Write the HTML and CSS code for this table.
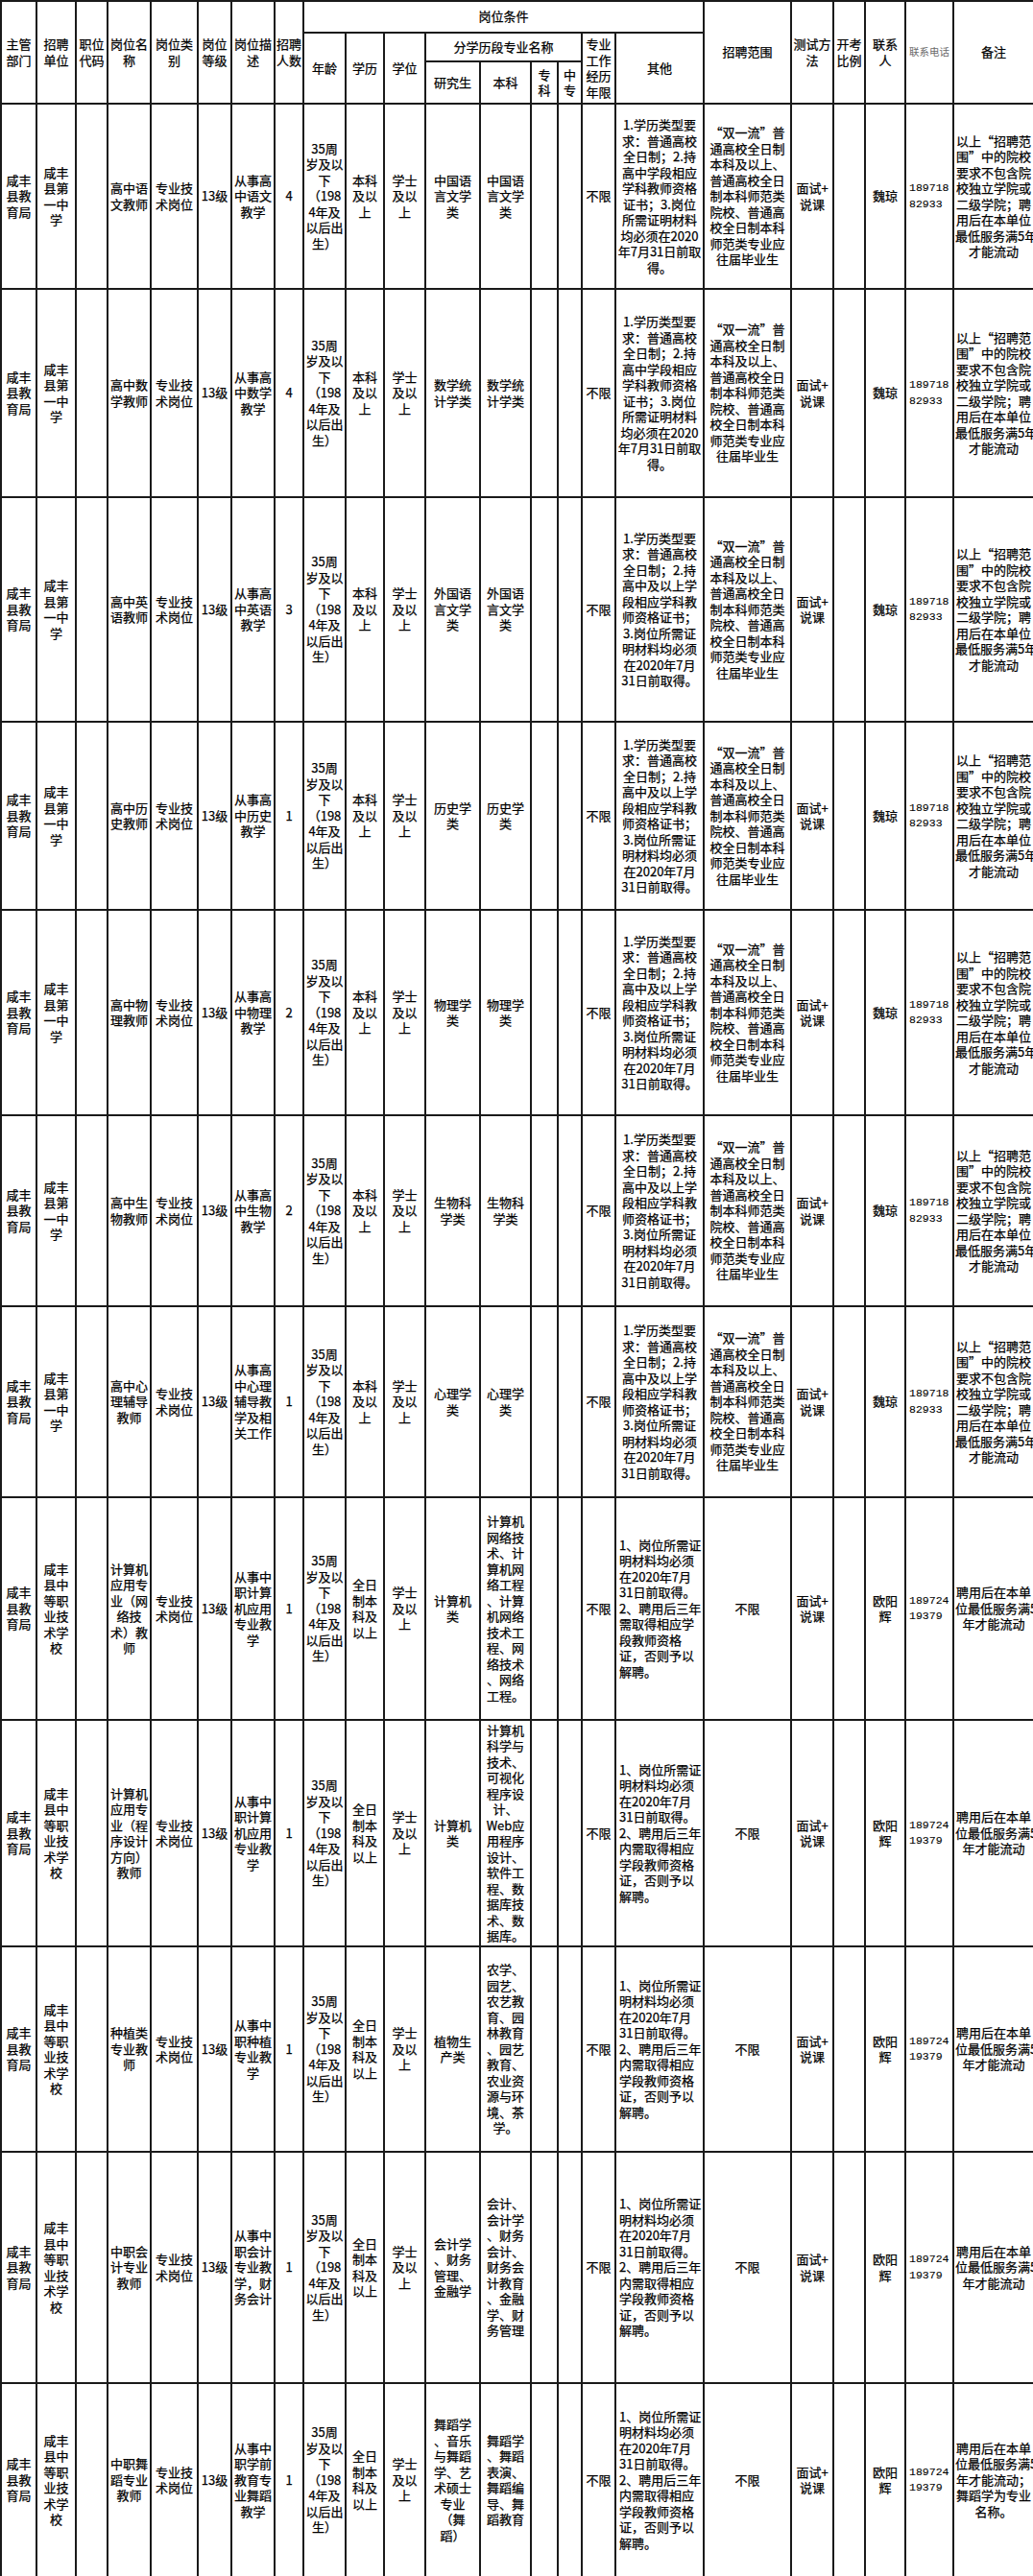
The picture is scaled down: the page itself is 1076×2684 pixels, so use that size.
FILE: index.html
```html
<!DOCTYPE html>
<html lang="zh-CN">
<head>
<meta charset="utf-8">
<title>咸丰县教育局招聘岗位表</title>
<link rel="stylesheet" href="styles.css">
</head>
<body>
<table class="grid">
<colgroup>
<col class="w37"><col class="w41"><col class="w33"><col class="w45"><col class="w49"><col class="w35"><col class="w45"><col class="w30">
<col class="w44"><col class="w40"><col class="w43"><col class="w57"><col class="w53"><col class="w28"><col class="w25"><col class="w35">
<col class="w92"><col class="w91"><col class="w44"><col class="w33"><col class="w42"><col class="w50"><col class="w84">
</colgroup>
<thead>
<tr class="ha">
<th rowspan="3">主管<br>部门</th>
<th rowspan="3">招聘<br>单位</th>
<th rowspan="3">职位<br>代码</th>
<th rowspan="3">岗位名<br>称</th>
<th rowspan="3">岗位类<br>别</th>
<th rowspan="3">岗位<br>等级</th>
<th rowspan="3">岗位描<br>述</th>
<th rowspan="3">招聘<br>人数</th>
<th colspan="9">岗位条件</th>
<th rowspan="3">招聘范围</th>
<th rowspan="3">测试方<br>法</th>
<th rowspan="3">开考<br>比例</th>
<th rowspan="3">联系<br>人</th>
<th rowspan="3" class="small">联系电话</th>
<th rowspan="3">备注</th>
</tr>
<tr class="hb">
<th rowspan="2">年龄</th>
<th rowspan="2">学历</th>
<th rowspan="2">学位</th>
<th colspan="4">分学历段专业名称</th>
<th rowspan="2">专业<br>工作<br>经历<br>年限</th>
<th rowspan="2">其他</th>
</tr>
<tr class="hc">
<th>研究生</th>
<th>本科</th>
<th>专<br>科</th>
<th>中<br>专</th>
</tr>
</thead>
<tbody>
<!-- 1 语文 -->
<tr class="r1">
<td>咸丰<br>县教<br>育局</td>
<td>咸丰<br>县第<br>一中<br>学</td>
<td></td>
<td>高中语<br>文教师</td>
<td>专业技<br>术岗位</td>
<td>13级</td>
<td>从事高<br>中语文<br>教学</td>
<td>4</td>
<td>35周<br>岁及以<br>下<br>（198<br>4年及<br>以后出<br>生）</td>
<td>本科<br>及以<br>上</td>
<td>学士<br>及以<br>上</td>
<td>中国语<br>言文学<br>类</td>
<td>中国语<br>言文学<br>类</td>
<td></td><td></td>
<td>不限</td>
<td>1.学历类型要<br>求：普通高校<br>全日制；2.持<br>高中学段相应<br>学科教师资格<br>证书；3.岗位<br>所需证明材料<br>均必须在2020<br>年7月31日前取<br>得。</td>
<td>“双一流”普<br>通高校全日制<br>本科及以上、<br>普通高校全日<br>制本科师范类<br>院校、普通高<br>校全日制本科<br>师范类专业应<br>往届毕业生</td>
<td>面试+<br>说课</td>
<td></td>
<td>魏琼</td>
<td class="ph">189718<br>82933</td>
<td>以上“招聘范<br>围”中的院校<br>要求不包含院<br>校独立学院或<br>二级学院；聘<br>用后在本单位<br>最低服务满5年<br>才能流动</td>
</tr>
<!-- 2 数学 -->
<tr class="r2">
<td>咸丰<br>县教<br>育局</td>
<td>咸丰<br>县第<br>一中<br>学</td>
<td></td>
<td>高中数<br>学教师</td>
<td>专业技<br>术岗位</td>
<td>13级</td>
<td>从事高<br>中数学<br>教学</td>
<td>4</td>
<td>35周<br>岁及以<br>下<br>（198<br>4年及<br>以后出<br>生）</td>
<td>本科<br>及以<br>上</td>
<td>学士<br>及以<br>上</td>
<td>数学统<br>计学类</td>
<td>数学统<br>计学类</td>
<td></td><td></td>
<td>不限</td>
<td>1.学历类型要<br>求：普通高校<br>全日制；2.持<br>高中学段相应<br>学科教师资格<br>证书；3.岗位<br>所需证明材料<br>均必须在2020<br>年7月31日前取<br>得。</td>
<td>“双一流”普<br>通高校全日制<br>本科及以上、<br>普通高校全日<br>制本科师范类<br>院校、普通高<br>校全日制本科<br>师范类专业应<br>往届毕业生</td>
<td>面试+<br>说课</td>
<td></td>
<td>魏琼</td>
<td class="ph">189718<br>82933</td>
<td>以上“招聘范<br>围”中的院校<br>要求不包含院<br>校独立学院或<br>二级学院；聘<br>用后在本单位<br>最低服务满5年<br>才能流动</td>
</tr>
<!-- 3 英语 -->
<tr class="r3">
<td>咸丰<br>县教<br>育局</td>
<td>咸丰<br>县第<br>一中<br>学</td>
<td></td>
<td>高中英<br>语教师</td>
<td>专业技<br>术岗位</td>
<td>13级</td>
<td>从事高<br>中英语<br>教学</td>
<td>3</td>
<td>35周<br>岁及以<br>下<br>（198<br>4年及<br>以后出<br>生）</td>
<td>本科<br>及以<br>上</td>
<td>学士<br>及以<br>上</td>
<td>外国语<br>言文学<br>类</td>
<td>外国语<br>言文学<br>类</td>
<td></td><td></td>
<td>不限</td>
<td>1.学历类型要<br>求：普通高校<br>全日制；2.持<br>高中及以上学<br>段相应学科教<br>师资格证书；<br>3.岗位所需证<br>明材料均必须<br>在2020年7月<br>31日前取得。</td>
<td>“双一流”普<br>通高校全日制<br>本科及以上、<br>普通高校全日<br>制本科师范类<br>院校、普通高<br>校全日制本科<br>师范类专业应<br>往届毕业生</td>
<td>面试+<br>说课</td>
<td></td>
<td>魏琼</td>
<td class="ph">189718<br>82933</td>
<td>以上“招聘范<br>围”中的院校<br>要求不包含院<br>校独立学院或<br>二级学院；聘<br>用后在本单位<br>最低服务满5年<br>才能流动</td>
</tr>
<!-- 4 历史 -->
<tr class="r4">
<td>咸丰<br>县教<br>育局</td>
<td>咸丰<br>县第<br>一中<br>学</td>
<td></td>
<td>高中历<br>史教师</td>
<td>专业技<br>术岗位</td>
<td>13级</td>
<td>从事高<br>中历史<br>教学</td>
<td>1</td>
<td>35周<br>岁及以<br>下<br>（198<br>4年及<br>以后出<br>生）</td>
<td>本科<br>及以<br>上</td>
<td>学士<br>及以<br>上</td>
<td>历史学<br>类</td>
<td>历史学<br>类</td>
<td></td><td></td>
<td>不限</td>
<td>1.学历类型要<br>求：普通高校<br>全日制；2.持<br>高中及以上学<br>段相应学科教<br>师资格证书；<br>3.岗位所需证<br>明材料均必须<br>在2020年7月<br>31日前取得。</td>
<td>“双一流”普<br>通高校全日制<br>本科及以上、<br>普通高校全日<br>制本科师范类<br>院校、普通高<br>校全日制本科<br>师范类专业应<br>往届毕业生</td>
<td>面试+<br>说课</td>
<td></td>
<td>魏琼</td>
<td class="ph">189718<br>82933</td>
<td>以上“招聘范<br>围”中的院校<br>要求不包含院<br>校独立学院或<br>二级学院；聘<br>用后在本单位<br>最低服务满5年<br>才能流动</td>
</tr>
<!-- 5 物理 -->
<tr class="r5">
<td>咸丰<br>县教<br>育局</td>
<td>咸丰<br>县第<br>一中<br>学</td>
<td></td>
<td>高中物<br>理教师</td>
<td>专业技<br>术岗位</td>
<td>13级</td>
<td>从事高<br>中物理<br>教学</td>
<td>2</td>
<td>35周<br>岁及以<br>下<br>（198<br>4年及<br>以后出<br>生）</td>
<td>本科<br>及以<br>上</td>
<td>学士<br>及以<br>上</td>
<td>物理学<br>类</td>
<td>物理学<br>类</td>
<td></td><td></td>
<td>不限</td>
<td>1.学历类型要<br>求：普通高校<br>全日制；2.持<br>高中及以上学<br>段相应学科教<br>师资格证书；<br>3.岗位所需证<br>明材料均必须<br>在2020年7月<br>31日前取得。</td>
<td>“双一流”普<br>通高校全日制<br>本科及以上、<br>普通高校全日<br>制本科师范类<br>院校、普通高<br>校全日制本科<br>师范类专业应<br>往届毕业生</td>
<td>面试+<br>说课</td>
<td></td>
<td>魏琼</td>
<td class="ph">189718<br>82933</td>
<td>以上“招聘范<br>围”中的院校<br>要求不包含院<br>校独立学院或<br>二级学院；聘<br>用后在本单位<br>最低服务满5年<br>才能流动</td>
</tr>
<!-- 6 生物 -->
<tr class="r6">
<td>咸丰<br>县教<br>育局</td>
<td>咸丰<br>县第<br>一中<br>学</td>
<td></td>
<td>高中生<br>物教师</td>
<td>专业技<br>术岗位</td>
<td>13级</td>
<td>从事高<br>中生物<br>教学</td>
<td>2</td>
<td>35周<br>岁及以<br>下<br>（198<br>4年及<br>以后出<br>生）</td>
<td>本科<br>及以<br>上</td>
<td>学士<br>及以<br>上</td>
<td>生物科<br>学类</td>
<td>生物科<br>学类</td>
<td></td><td></td>
<td>不限</td>
<td>1.学历类型要<br>求：普通高校<br>全日制；2.持<br>高中及以上学<br>段相应学科教<br>师资格证书；<br>3.岗位所需证<br>明材料均必须<br>在2020年7月<br>31日前取得。</td>
<td>“双一流”普<br>通高校全日制<br>本科及以上、<br>普通高校全日<br>制本科师范类<br>院校、普通高<br>校全日制本科<br>师范类专业应<br>往届毕业生</td>
<td>面试+<br>说课</td>
<td></td>
<td>魏琼</td>
<td class="ph">189718<br>82933</td>
<td>以上“招聘范<br>围”中的院校<br>要求不包含院<br>校独立学院或<br>二级学院；聘<br>用后在本单位<br>最低服务满5年<br>才能流动</td>
</tr>
<!-- 7 心理 -->
<tr class="r7">
<td>咸丰<br>县教<br>育局</td>
<td>咸丰<br>县第<br>一中<br>学</td>
<td></td>
<td>高中心<br>理辅导<br>教师</td>
<td>专业技<br>术岗位</td>
<td>13级</td>
<td>从事高<br>中心理<br>辅导教<br>学及相<br>关工作</td>
<td>1</td>
<td>35周<br>岁及以<br>下<br>（198<br>4年及<br>以后出<br>生）</td>
<td>本科<br>及以<br>上</td>
<td>学士<br>及以<br>上</td>
<td>心理学<br>类</td>
<td>心理学<br>类</td>
<td></td><td></td>
<td>不限</td>
<td>1.学历类型要<br>求：普通高校<br>全日制；2.持<br>高中及以上学<br>段相应学科教<br>师资格证书；<br>3.岗位所需证<br>明材料均必须<br>在2020年7月<br>31日前取得。</td>
<td>“双一流”普<br>通高校全日制<br>本科及以上、<br>普通高校全日<br>制本科师范类<br>院校、普通高<br>校全日制本科<br>师范类专业应<br>往届毕业生</td>
<td>面试+<br>说课</td>
<td></td>
<td>魏琼</td>
<td class="ph">189718<br>82933</td>
<td>以上“招聘范<br>围”中的院校<br>要求不包含院<br>校独立学院或<br>二级学院；聘<br>用后在本单位<br>最低服务满5年<br>才能流动</td>
</tr>
<!-- 8 计算机网络 -->
<tr class="r8">
<td>咸丰<br>县教<br>育局</td>
<td>咸丰<br>县中<br>等职<br>业技<br>术学<br>校</td>
<td></td>
<td>计算机<br>应用专<br>业（网<br>络技<br>术）教<br>师</td>
<td>专业技<br>术岗位</td>
<td>13级</td>
<td>从事中<br>职计算<br>机应用<br>专业教<br>学</td>
<td>1</td>
<td>35周<br>岁及以<br>下<br>（198<br>4年及<br>以后出<br>生）</td>
<td>全日<br>制本<br>科及<br>以上</td>
<td>学士<br>及以<br>上</td>
<td>计算机<br>类</td>
<td>计算机<br>网络技<br>术、计<br>算机网<br>络工程<br>、计算<br>机网络<br>技术工<br>程、网<br>络技术<br>、网络<br>工程。</td>
<td></td><td></td>
<td>不限</td>
<td class="l">1、岗位所需证<br>明材料均必须<br>在2020年7月<br>31日前取得。<br>2、聘用后三年<br>需取得相应学<br>段教师资格<br>证，否则予以<br>解聘。</td>
<td>不限</td>
<td>面试+<br>说课</td>
<td></td>
<td>欧阳<br>辉</td>
<td class="ph">189724<br>19379</td>
<td>聘用后在本单<br>位最低服务满5<br>年才能流动</td>
</tr>
<!-- 9 计算机程序设计 -->
<tr class="r9">
<td>咸丰<br>县教<br>育局</td>
<td>咸丰<br>县中<br>等职<br>业技<br>术学<br>校</td>
<td></td>
<td>计算机<br>应用专<br>业（程<br>序设计<br>方向）<br>教师</td>
<td>专业技<br>术岗位</td>
<td>13级</td>
<td>从事中<br>职计算<br>机应用<br>专业教<br>学</td>
<td>1</td>
<td>35周<br>岁及以<br>下<br>（198<br>4年及<br>以后出<br>生）</td>
<td>全日<br>制本<br>科及<br>以上</td>
<td>学士<br>及以<br>上</td>
<td>计算机<br>类</td>
<td>计算机<br>科学与<br>技术、<br>可视化<br>程序设<br>计、<br>Web应<br>用程序<br>设计、<br>软件工<br>程、数<br>据库技<br>术、数<br>据库。</td>
<td></td><td></td>
<td>不限</td>
<td class="l">1、岗位所需证<br>明材料均必须<br>在2020年7月<br>31日前取得。<br>2、聘用后三年<br>内需取得相应<br>学段教师资格<br>证，否则予以<br>解聘。</td>
<td>不限</td>
<td>面试+<br>说课</td>
<td></td>
<td>欧阳<br>辉</td>
<td class="ph">189724<br>19379</td>
<td>聘用后在本单<br>位最低服务满5<br>年才能流动</td>
</tr>
<!-- 10 种植 -->
<tr class="r10">
<td>咸丰<br>县教<br>育局</td>
<td>咸丰<br>县中<br>等职<br>业技<br>术学<br>校</td>
<td></td>
<td>种植类<br>专业教<br>师</td>
<td>专业技<br>术岗位</td>
<td>13级</td>
<td>从事中<br>职种植<br>专业教<br>学</td>
<td>1</td>
<td>35周<br>岁及以<br>下<br>（198<br>4年及<br>以后出<br>生）</td>
<td>全日<br>制本<br>科及<br>以上</td>
<td>学士<br>及以<br>上</td>
<td>植物生<br>产类</td>
<td>农学、<br>园艺、<br>农艺教<br>育、园<br>林教育<br>、园艺<br>教育、<br>农业资<br>源与环<br>境、茶<br>学。</td>
<td></td><td></td>
<td>不限</td>
<td class="l">1、岗位所需证<br>明材料均必须<br>在2020年7月<br>31日前取得。<br>2、聘用后三年<br>内需取得相应<br>学段教师资格<br>证，否则予以<br>解聘。</td>
<td>不限</td>
<td>面试+<br>说课</td>
<td></td>
<td>欧阳<br>辉</td>
<td class="ph">189724<br>19379</td>
<td>聘用后在本单<br>位最低服务满5<br>年才能流动</td>
</tr>
<!-- 11 会计 -->
<tr class="r11">
<td>咸丰<br>县教<br>育局</td>
<td>咸丰<br>县中<br>等职<br>业技<br>术学<br>校</td>
<td></td>
<td>中职会<br>计专业<br>教师</td>
<td>专业技<br>术岗位</td>
<td>13级</td>
<td>从事中<br>职会计<br>专业教<br>学，财<br>务会计</td>
<td>1</td>
<td>35周<br>岁及以<br>下<br>（198<br>4年及<br>以后出<br>生）</td>
<td>全日<br>制本<br>科及<br>以上</td>
<td>学士<br>及以<br>上</td>
<td>会计学<br>、财务<br>管理、<br>金融学</td>
<td>会计、<br>会计学<br>、财务<br>会计、<br>财务会<br>计教育<br>、金融<br>学、财<br>务管理</td>
<td></td><td></td>
<td>不限</td>
<td class="l">1、岗位所需证<br>明材料均必须<br>在2020年7月<br>31日前取得。<br>2、聘用后三年<br>内需取得相应<br>学段教师资格<br>证，否则予以<br>解聘。</td>
<td>不限</td>
<td>面试+<br>说课</td>
<td></td>
<td>欧阳<br>辉</td>
<td class="ph">189724<br>19379</td>
<td>聘用后在本单<br>位最低服务满5<br>年才能流动</td>
</tr>
<!-- 12 舞蹈 -->
<tr class="r12">
<td>咸丰<br>县教<br>育局</td>
<td>咸丰<br>县中<br>等职<br>业技<br>术学<br>校</td>
<td></td>
<td>中职舞<br>蹈专业<br>教师</td>
<td>专业技<br>术岗位</td>
<td>13级</td>
<td>从事中<br>职学前<br>教育专<br>业舞蹈<br>教学</td>
<td>1</td>
<td>35周<br>岁及以<br>下<br>（198<br>4年及<br>以后出<br>生）</td>
<td>全日<br>制本<br>科及<br>以上</td>
<td>学士<br>及以<br>上</td>
<td>舞蹈学<br>、音乐<br>与舞蹈<br>学、艺<br>术硕士<br>专业<br>（舞<br>蹈）</td>
<td>舞蹈学<br>、舞蹈<br>表演、<br>舞蹈编<br>导、舞<br>蹈教育</td>
<td></td><td></td>
<td>不限</td>
<td class="l">1、岗位所需证<br>明材料均必须<br>在2020年7月<br>31日前取得。<br>2、聘用后三年<br>内需取得相应<br>学段教师资格<br>证，否则予以<br>解聘。</td>
<td>不限</td>
<td>面试+<br>说课</td>
<td></td>
<td>欧阳<br>辉</td>
<td class="ph">189724<br>19379</td>
<td>聘用后在本单<br>位最低服务满5<br>年才能流动；<br>舞蹈学为专业<br>名称。</td>
</tr>
</tbody>
</table>
</body>
</html>
```

FILE: styles.css
```css
html, body {
  margin: 0;
  padding: 0;
  background: #ffffff;
}

.grid {
  border-collapse: collapse;
  table-layout: fixed;
  width: 1076px;
  font-family: "Noto Sans CJK SC", "Noto Sans", sans-serif;
  font-size: 13px;
  line-height: 16.5px;
  color: #000000;
  -webkit-text-stroke: 0.25px #000000;
}

.grid th,
.grid td {
  border: 2px solid #1a1a1a;
  padding: 0 1px;
  text-align: center;
  vertical-align: middle;
  white-space: nowrap;
  overflow: visible;
  font-weight: normal;
}

.grid th.small {
  font-size: 10.5px;
  color: #6a6a6a;
  -webkit-text-stroke: 0;
}

.grid td.l {
  text-align: left;
  padding-left: 3px;
}

.grid td.ph {
  text-align: left;
  padding-left: 3px;
  font-family: "Liberation Mono", "DejaVu Sans Mono", monospace;
  font-size: 11.5px;
  line-height: 16.5px;
  -webkit-text-stroke: 0.1px #000000;
}

/* column widths */
.w25 { width: 25px; }
.w28 { width: 28px; }
.w30 { width: 30px; }
.w33 { width: 33px; }
.w35 { width: 35px; }
.w37 { width: 37px; }
.w40 { width: 40px; }
.w41 { width: 41px; }
.w42 { width: 42px; }
.w43 { width: 43px; }
.w44 { width: 44px; }
.w45 { width: 45px; }
.w49 { width: 49px; }
.w50 { width: 50px; }
.w53 { width: 53px; }
.w57 { width: 57px; }
.w84 { width: 84px; }
.w91 { width: 91px; }
.w92 { width: 92px; }

/* row heights */
.ha { height: 33px; }
.hb { height: 30px; }
.hc { height: 44px; }
.r1 { height: 193px; }
.r2 { height: 217px; }
.r3 { height: 234px; }
.r4 { height: 196px; }
.r5 { height: 214px; }
.r6 { height: 199px; }
.r7 { height: 199px; }
.r8 { height: 232px; }
.r9 { height: 236px; }
.r10 { height: 214px; }
.r11 { height: 241px; }
.r12 { height: 202px; }
```
